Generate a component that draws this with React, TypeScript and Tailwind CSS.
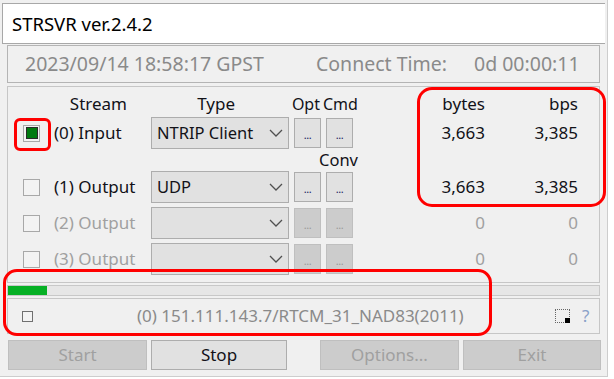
import React from 'react';

type Row = {
    label: string;
    type: string;
    checked: boolean;
    enabled: boolean;
    bytes: string;
    bps: string;
};

const rows: Row[] = [
    { label: '(0) Input', type: 'NTRIP Client', checked: true, enabled: true, bytes: '3,663', bps: '3,385' },
    { label: '(1) Output', type: 'UDP', checked: false, enabled: true, bytes: '3,663', bps: '3,385' },
    { label: '(2) Output', type: '', checked: false, enabled: false, bytes: '0', bps: '0' },
    { label: '(3) Output', type: '', checked: false, enabled: false, bytes: '0', bps: '0' },
];

function Chevron() {
    return (
        <svg width="14" height="8" viewBox="0 0 14 8" className="shrink-0">
            <polyline points="1,1 7,7 13,1" fill="none" stroke="#505050" strokeWidth="1.3" />
        </svg>
    );
}

function CheckBox({ checked }: { checked: boolean }) {
    return (
        <div className="w-[17px] h-[17px] border border-[#a8a8a8] bg-[#f3f3f3] flex items-center justify-center">
            {checked && <div className="w-[12px] h-[12px] bg-[#007a10] border border-[#2a2a2a]" />}
        </div>
    );
}

function DotButton({ enabled }: { enabled: boolean }) {
    return (
        <div
            className={`w-[27px] h-[30px] border flex items-end justify-center pb-[7px] text-[11px] leading-none tracking-[-0.5px] ${
                enabled ? 'bg-[#e1e1e1] border-[#adadad] text-[#202060]' : 'bg-[#cccccc] border-[#bfbfbf] text-[#9a9a9a]'
            }`}
        >
            ...
        </div>
    );
}

function StreamRow({ row }: { row: Row }) {
    const txt = row.enabled ? 'text-[#121218]' : 'text-[#a0a0a0]';
    return (
        <div className="flex items-center h-[32px]">
            <div className="w-[15px]" />
            <CheckBox checked={row.checked} />
            <div className={`w-[111px] pl-[14px] text-[17px] whitespace-nowrap ${txt}`}>{row.label}</div>
            <div className="w-[138px] h-[32px] bg-[#e1e1e1] border border-[#adadad] flex items-center justify-between pl-[5px] pr-[5px] text-[16.5px] text-[#121218]">
                <span>{row.type}</span>
                <Chevron />
            </div>
            <div className="ml-[5px]">
                <DotButton enabled={row.enabled} />
            </div>
            <div className="ml-[5px]">
                <DotButton enabled={row.enabled} />
            </div>
            <div className={`w-[132px] text-right text-[17px] ${txt}`}>{row.bytes}</div>
            <div className={`w-[93px] text-right text-[17px] ${txt}`}>{row.bps}</div>
        </div>
    );
}

function BottomButton({ label, enabled, width }: { label: string; enabled: boolean; width: string }) {
    return (
        <div
            className={`${width} h-[30px] border flex items-center justify-center text-[17px] ${
                enabled ? 'bg-[#e1e1e1] border-[#adadad] text-[#121218]' : 'bg-[#cccccc] border-[#bfbfbf] text-[#a0a0a0]'
            }`}
        >
            {label}
        </div>
    );
}

export default function App() {
    return (
        <div className="w-[614px] h-[379px] bg-white relative overflow-hidden font-['Noto_Sans',sans-serif]">
            <div className="w-[608px] h-[377px] bg-[#f0f0f0] border-r border-b border-[#cdcdcd] pt-[3px] pl-[2px] pr-[2px]">
                {/* title */}
                <div className="h-[41px] bg-white border-l border-t border-b border-[#a8a8a8] pl-[9px] flex items-center text-[18.5px] text-black">
                    STRSVR ver.2.4.2
                </div>

                <div className="px-[5px]">
                    {/* time panel */}
                    <div className="mt-[1px] h-[38px] border border-[#b4b4b4] flex items-center text-[19.5px] text-[#8a8a8a]">
                        <span className="ml-[17px] w-[291px] whitespace-nowrap">2023/09/14 18:58:17 GPST</span>
                        <span className="w-[158px] whitespace-nowrap">Connect Time:</span>
                        <span className="whitespace-nowrap">0d 00:00:11</span>
                    </div>

                    {/* main panel */}
                    <div className="mt-[3px] h-[197px] border border-[#c6c6c6] flex flex-col">
                        <div className="h-[30px] pt-[3px] flex items-center text-[17px] text-[#121218]">
                            <div className="w-[119px] text-right">Stream</div>
                            <div className="w-[108px] text-right">Type</div>
                            <div className="w-[85px] text-right text-[16px]">Opt</div>
                            <div className="w-[35px] ml-[3px] text-[16px]">Cmd</div>
                            <div className="w-[127px] text-right">bytes</div>
                            <div className="w-[93px] text-right">bps</div>
                        </div>
                        <StreamRow row={rows[0]} />
                        <div className="h-[22px] flex items-center text-[16.5px] text-[#121218]">
                            <div className="w-[350px] text-right">Conv</div>
                        </div>
                        <div className="flex flex-col gap-[4px]">
                            {rows.slice(1).map((r) => (
                                <StreamRow key={r.label} row={r} />
                            ))}
                        </div>
                    </div>

                    {/* progress */}
                    <div className="mt-[2px] h-[11px] border border-[#c8c8c8] bg-[#e6e6e6]">
                        <div className="w-[39px] h-full bg-[#06b025]" />
                    </div>

                    {/* status */}
                    <div className="mt-[2px] h-[36px] border border-[#c6c6c6] flex items-center text-[17px] text-[#8a8a8a]">
                        <div className="ml-[14px] w-[11px] h-[11px] border border-[#707070] bg-[#f3f3f3]" />
                        <div className="ml-[104px] w-[410px] whitespace-nowrap">(0) 151.111.143.7/RTCM_31_NAD83(2011)</div>
                        <div className="ml-[8px] relative w-[15px] h-[14px] border border-dotted border-[#666]">
                            <div className="absolute right-[-1px] bottom-[-1px] w-[5px] h-[5px] bg-black" />
                        </div>
                        <div className="ml-[12px] text-[#8aa0c8]">?</div>
                    </div>

                    {/* buttons */}
                    <div className="mt-[6px] flex">
                        <div className="ml-[1px]">
                            <BottomButton label="Start" enabled={false} width="w-[139px]" />
                        </div>
                        <div className="ml-[4px]">
                            <BottomButton label="Stop" enabled={true} width="w-[136px]" />
                        </div>
                        <div className="ml-[33px]">
                            <BottomButton label="Options..." enabled={false} width="w-[139px]" />
                        </div>
                        <div className="ml-[4px]">
                            <BottomButton label="Exit" enabled={false} width="w-[138px]" />
                        </div>
                    </div>
                </div>
            </div>

            {/* red annotations */}
            <div className="absolute left-[14px] top-[118px] w-[37px] h-[33px] border-[3px] border-[#ff0000] rounded-[6px]" />
            <div className="absolute left-[417px] top-[87px] w-[189px] h-[120px] border-[3.5px] border-[#ff0000] rounded-[15px]" />
            <div className="absolute left-[3px] top-[269px] w-[489px] h-[67px] border-[3.5px] border-[#ff0000] rounded-[14px]" />
        </div>
    );
}
